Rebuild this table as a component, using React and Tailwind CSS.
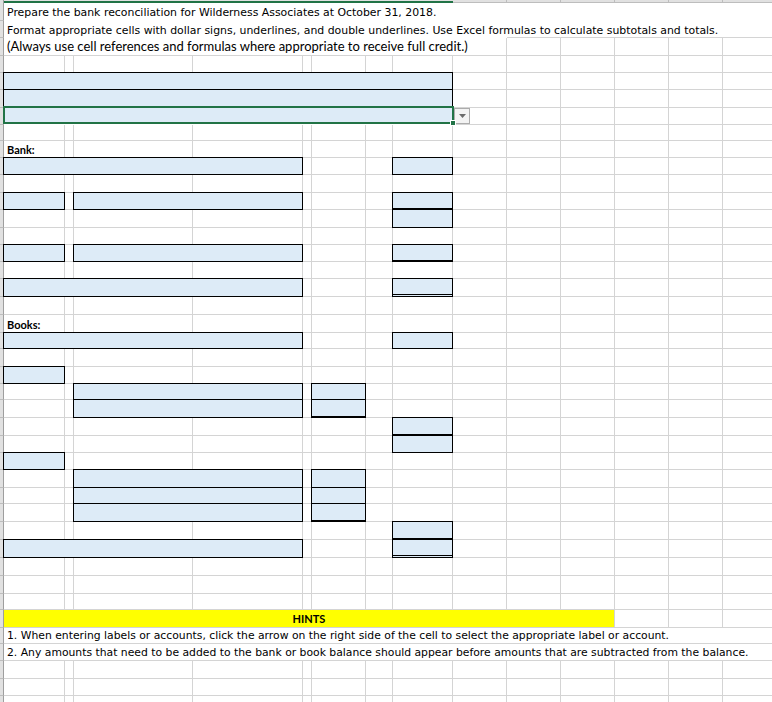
import React from "react";

const COLS =
  "grid grid-cols-[4px_61px_9px_119px_110px_9px_54px_27px_60px_54px_54px_54px_54px_54px_54px]";

const HEIGHTS = [
  18, 17, 18, 17, 17, 18, 17, 16, 17, 17, 18, 17, 18, 17, 17, 17, 18, 18, 18, 16, 18,
  17, 16, 18, 18, 17, 17, 18, 16, 18, 18, 18, 18, 18, 16, 18, 16, 17, 18, 17, 17,
];
const H = { 16: "h-[16px]", 17: "h-[17px]", 18: "h-[18px]" };
const SPAN = {
  1: "col-span-1",
  2: "col-span-2",
  4: "col-span-4",
  8: "col-span-8",
  9: "col-span-9",
  11: "col-span-11",
  14: "col-span-14",
};

const PLAIN = "border-r border-b border-[#d4d4d4]";
const BOX = "-mt-px -ml-px bg-[#ddebf7] border border-black";
const BOX_U = "-mt-px -ml-px bg-[#ddebf7] border border-black border-b-2";
const BOX_DU = "-mt-px -ml-px bg-[#ddebf7] border border-double border-black border-b-[3px]";
const SEL = "-mt-[2px] -ml-px -mr-px mb-px bg-[#ddebf7] border-2 border-[#217346] relative";

const TAHOMA = "font-['DejaVu_Sans',sans-serif] text-[10.9px] text-black";
const HINT = "font-['DejaVu_Sans',sans-serif] text-[10.8px] text-black";
const CALIBRI = "font-['Lato',sans-serif] text-[13px] text-black";
const LABEL = "font-['Lato',sans-serif] text-[11px] font-bold text-black";

function Text({ children, className, pb = "pb-[2px]" }) {
  return (
    <div className={"flex h-full items-end pl-[3px] whitespace-nowrap leading-none " + pb + " " + className}>
      {children}
    </div>
  );
}

function Dropdown() {
  return (
    <div className="ml-px flex h-[16px] w-[16px] items-center justify-center border border-[#acacac] bg-[#f3f3f3]">
      <svg width="7" height="4" viewBox="0 0 7 4">
        <path d="M0 0h7L3.5 4z" fill="#6b6b6b" />
      </svg>
    </div>
  );
}

const ROWS = {
  1: [{ s: 0, n: 14, cls: "", body: <Text className={TAHOMA} pb="pb-[2px]">Prepare the bank reconciliation for Wilderness Associates at October 31, 2018.</Text> }],
  2: [
    { s: 0, n: 9, cls: "", body: <Text className={TAHOMA} pb="pb-px">Format appropriate cells with dollar signs, underlines, and double underlines. Use Excel formulas to calculate subtotals and totals.</Text> },
    { s: 9, n: 1, cls: "border-b border-[#d4d4d4]" },
    { s: 10, n: 1, cls: "border-b border-[#d4d4d4]" },
    { s: 11, n: 1, cls: "border-b border-[#d4d4d4]" },
    { s: 12, n: 1, cls: "border-b border-[#d4d4d4]" },
    { s: 13, n: 1, cls: "border-b border-[#d4d4d4]" },
  ],
  3: [{ s: 0, n: 9, cls: PLAIN, body: <Text className={CALIBRI}>(Always use cell references and formulas where appropriate to receive full credit.)</Text> }],
  5: [{ s: 0, n: 8, cls: BOX }],
  6: [{ s: 0, n: 8, cls: BOX }],
  7: [
    {
      s: 0,
      n: 8,
      cls: SEL,
      body: <div className="absolute -right-[4px] -bottom-[4px] h-[6px] w-[6px] border border-white bg-[#217346]" />,
    },
    { s: 8, n: 1, cls: PLAIN, body: <Dropdown /> },
  ],
  9: [{ s: 0, n: 1, cls: PLAIN, body: <Text className={LABEL}>Bank:</Text> }],
  10: [{ s: 0, n: 4, cls: BOX }, { s: 7, n: 1, cls: BOX }],
  12: [{ s: 0, n: 1, cls: BOX }, { s: 2, n: 2, cls: BOX }, { s: 7, n: 1, cls: BOX_U }],
  13: [{ s: 7, n: 1, cls: BOX }],
  15: [{ s: 0, n: 1, cls: BOX }, { s: 2, n: 2, cls: BOX }, { s: 7, n: 1, cls: BOX_U }],
  17: [{ s: 0, n: 4, cls: BOX }, { s: 7, n: 1, cls: BOX_DU }],
  19: [{ s: 0, n: 1, cls: PLAIN, body: <Text className={LABEL}>Books:</Text> }],
  20: [{ s: 0, n: 4, cls: BOX }, { s: 7, n: 1, cls: BOX }],
  22: [{ s: 0, n: 1, cls: BOX }],
  23: [{ s: 2, n: 2, cls: BOX }, { s: 5, n: 1, cls: BOX }],
  24: [{ s: 2, n: 2, cls: BOX }, { s: 5, n: 1, cls: BOX_U }],
  25: [{ s: 7, n: 1, cls: BOX_U }],
  26: [{ s: 7, n: 1, cls: BOX }],
  27: [{ s: 0, n: 1, cls: BOX }],
  28: [{ s: 2, n: 2, cls: BOX }, { s: 5, n: 1, cls: BOX }],
  29: [{ s: 2, n: 2, cls: BOX }, { s: 5, n: 1, cls: BOX }],
  30: [{ s: 2, n: 2, cls: BOX }, { s: 5, n: 1, cls: BOX_U }],
  31: [{ s: 7, n: 1, cls: BOX_U }],
  32: [{ s: 0, n: 4, cls: BOX }, { s: 7, n: 1, cls: BOX_DU }],
  36: [
    {
      s: 0,
      n: 11,
      cls: "bg-[#ffff00] border-r border-b border-[#d4d4d4]",
      body: (
        <div className="flex h-full items-end justify-center pb-[3px] font-['Lato',sans-serif] text-[11px] font-bold leading-none text-black">
          HINTS
        </div>
      ),
    },
  ],
  37: [{ s: 0, n: 14, cls: "border-b border-[#d4d4d4]", body: <Text className={HINT} pb="pb-px">1. When entering labels or accounts, click the arrow on the right side of the cell to select the appropriate label or account.</Text> }],
  38: [{ s: 0, n: 14, cls: "border-b border-[#d4d4d4]", body: <Text className={HINT} pb="pb-px">2. Any amounts that need to be added to the bank or book balance should appear before amounts that are subtracted from the balance.</Text> }],
};

// fill the gaps between the given segments with ordinary cells
function cellsFor(row) {
  const segs = ROWS[row] || [];
  const out = [];
  let col = 0;
  for (const seg of segs) {
    while (col < seg.s) {
      out.push({ n: 1, cls: PLAIN });
      col++;
    }
    out.push(seg);
    col = seg.s + seg.n;
  }
  while (col < 14) {
    out.push({ n: 1, cls: PLAIN });
    col++;
  }
  return out;
}

function HeaderStrip() {
  return (
    <div className={COLS + " h-[3px]"}>
      <div className="bg-[#e1e1e1] border-r border-[#9e9e9e]" />
      {Array.from({ length: 14 }, (_, i) =>
        i < 8 ? (
          <div key={i} className="bg-[#e1e1e1] border-b-2 border-[#217346]" />
        ) : (
          <div key={i} className="bg-[#e1e1e1] border-r border-b border-[#bdbdbd]" />
        )
      )}
    </div>
  );
}

export default function App() {
  return (
    <div className="h-[702px] w-[772px] overflow-hidden bg-white">
      <HeaderStrip />
      {HEIGHTS.map((h, idx) => {
        const row = idx + 1;
        return (
          <div key={row} className={COLS + " " + H[h]}>
            <div className="bg-[#e1e1e1] border-r border-r-[#9e9e9e] border-b border-b-[#bdbdbd]" />
            {cellsFor(row).map((c, i) => (
              <div key={i} className={SPAN[c.n] + " " + c.cls}>
                {c.body}
              </div>
            ))}
          </div>
        );
      })}
    </div>
  );
}
